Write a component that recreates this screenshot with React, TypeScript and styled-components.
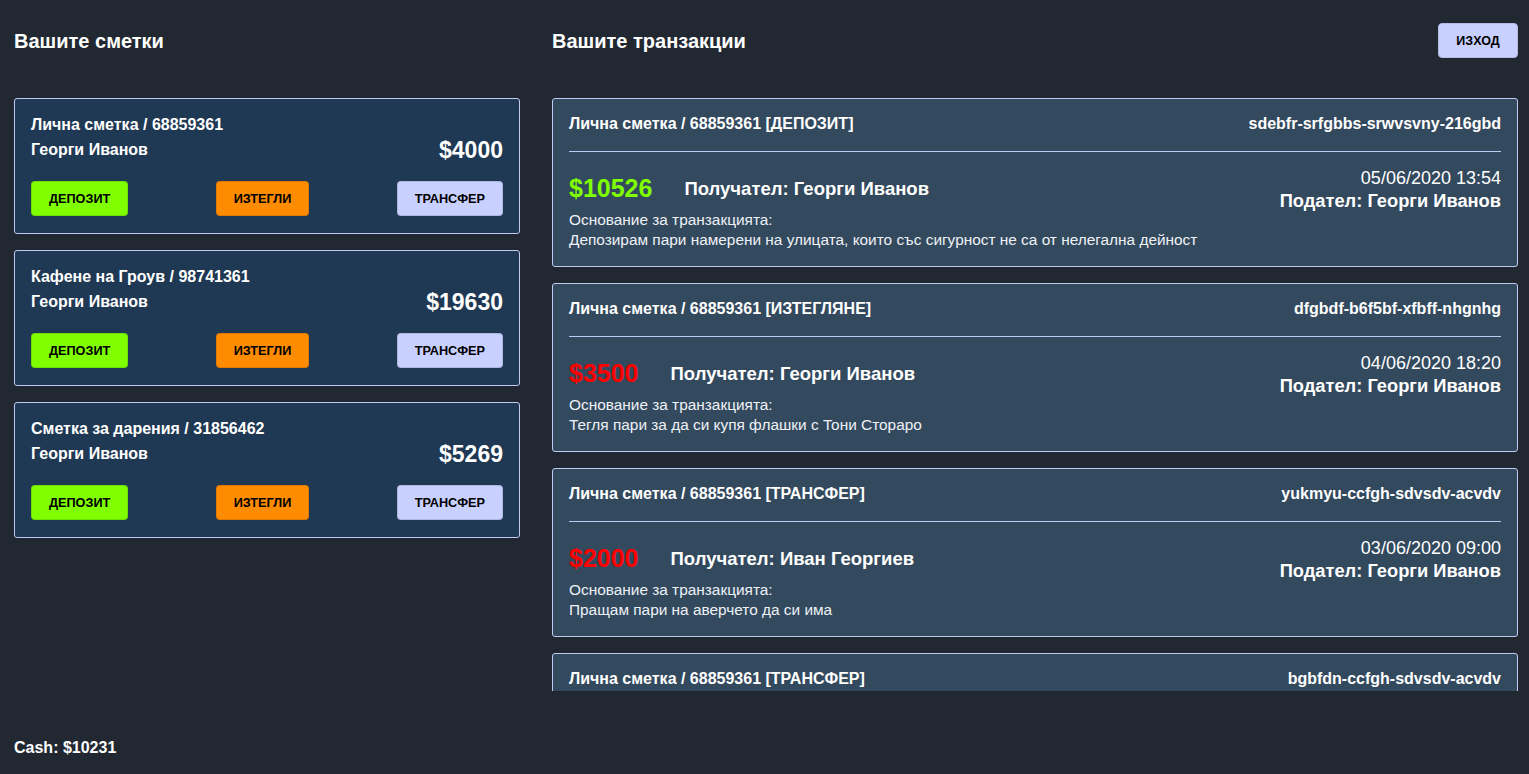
import React from "react"
import styled, { createGlobalStyle } from "styled-components"

const GlobalStyle = createGlobalStyle`
  html, body {
    margin: 0;
    padding: 0;
    background: #222831;
    font-family: "Liberation Sans", Arial, sans-serif;
    color: #ffffff;
  }
  * { box-sizing: border-box; }
`

const Page = styled.div`
  height: 100vh;
  padding: 23px 11px 0 14px;
  display: flex;
  flex-direction: column;
  overflow: hidden;
`

const Layout = styled.div`
  display: grid;
  grid-template-columns: 506px 1fr;
  grid-template-rows: 35px 593px;
  column-gap: 32px;
  row-gap: 40px;
`

const HeaderCell = styled.div`
  display: flex;
  align-items: center;
  justify-content: space-between;
`

const Heading = styled.h2`
  margin: 0;
  font-size: 20px;
  line-height: 24px;
  font-weight: bold;
`

const ExitButton = styled.button`
  height: 35px;
  width: 80px;
  border: 1px solid #b4bce6;
  border-radius: 4px;
  background: #c8d0ff;
  color: #000;
  font-family: "Liberation Sans", Arial, sans-serif;
  font-weight: bold;
  font-size: 12.5px;
  cursor: pointer;
`

const AccountList = styled.div`
  display: flex;
  flex-direction: column;
  gap: 16px;
`

const AccountCard = styled.div`
  background: #1f3853;
  border: 1px solid #c0c9f2;
  border-radius: 3px;
  padding: 17px 16px;
`

const AccountTitle = styled.div`
  font-size: 16px;
  font-weight: bold;
  line-height: 18px;
`

const AccountRow = styled.div`
  margin-top: 4px;
  height: 24px;
  display: flex;
  align-items: center;
  justify-content: space-between;
`

const OwnerName = styled.span`
  font-size: 16px;
  font-weight: bold;
`

const Balance = styled.span`
  font-size: 23px;
  font-weight: bold;
`

const ButtonRow = styled.div`
  margin-top: 19px;
  display: flex;
  justify-content: space-between;
`

const ActionButton = styled.button<{ $bg: string }>`
  height: 35px;
  padding: 0 17px;
  border: 1px solid rgba(0, 0, 0, 0.12);
  border-radius: 4px;
  background: ${p => p.$bg};
  color: #000;
  font-family: "Liberation Sans", Arial, sans-serif;
  font-weight: bold;
  font-size: 12.7px;
  line-height: 16px;
  cursor: pointer;
`

const TransactionList = styled.div`
  display: flex;
  flex-direction: column;
  gap: 16px;
  overflow-y: auto;
  scrollbar-width: none;
  &::-webkit-scrollbar { display: none; }
`

const TransactionCard = styled.div`
  flex-shrink: 0;
  background: #33495e;
  border: 1px solid #c0c9f2;
  border-radius: 3px;
  padding: 16px;
`

const TxHeader = styled.div`
  display: flex;
  justify-content: space-between;
  font-size: 16px;
  font-weight: bold;
  line-height: 18px;
`

const Divider = styled.hr`
  margin: 18px 0 16px;
  border: none;
  height: 1px;
  background: #c0c9f2;
`

const TxBody = styled.div`
  display: flex;
  justify-content: space-between;
  align-items: flex-start;
`

const TxMain = styled.div`
  display: flex;
  flex-direction: column;
`

const AmountRow = styled.div`
  height: 40px;
  display: flex;
  align-items: center;
  gap: 32px;
  margin-bottom: 2px;
`

const Amount = styled.span<{ $color: string }>`
  font-size: 25px;
  font-weight: bold;
  color: ${p => p.$color};
`

const Party = styled.span`
  font-size: 18.5px;
  font-weight: bold;
  margin-top: 2px;
`

const Reason = styled.div`
  font-size: 15.4px;
  line-height: 20px;
  color: #eef1f6;
`

const TxSide = styled.div`
  display: flex;
  flex-direction: column;
  align-items: flex-end;
`

const TxDate = styled.div`
  font-size: 18px;
  line-height: 20px;
`

const Sender = styled.div`
  margin-top: 2px;
  font-size: 18.3px;
  line-height: 22px;
  font-weight: bold;
`

const Footer = styled.div`
  margin-top: 47px;
  font-size: 16px;
  font-weight: bold;
  line-height: 20px;
`

const accounts = [
  { name: "Лична сметка", number: "68859361", owner: "Георги Иванов", balance: 4000 },
  { name: "Кафене на Гроув", number: "98741361", owner: "Георги Иванов", balance: 19630 },
  { name: "Сметка за дарения", number: "31856462", owner: "Георги Иванов", balance: 5269 },
]

const transactions = [
  {
    type: "ДЕПОЗИТ",
    id: "sdebfr-srfgbbs-srwvsvny-216gbd",
    amount: 10526,
    incoming: true,
    receiver: "Георги Иванов",
    date: "05/06/2020 13:54",
    sender: "Георги Иванов",
    reason: "Депозирам пари намерени на улицата, които със сигурност не са от нелегална дейност",
  },
  {
    type: "ИЗТЕГЛЯНЕ",
    id: "dfgbdf-b6f5bf-xfbff-nhgnhg",
    amount: 3500,
    incoming: false,
    receiver: "Георги Иванов",
    date: "04/06/2020 18:20",
    sender: "Георги Иванов",
    reason: "Тегля пари за да си купя флашки с Тони Стораро",
  },
  {
    type: "ТРАНСФЕР",
    id: "yukmyu-ccfgh-sdvsdv-acvdv",
    amount: 2000,
    incoming: false,
    receiver: "Иван Георгиев",
    date: "03/06/2020 09:00",
    sender: "Георги Иванов",
    reason: "Пращам пари на аверчето да си има",
  },
  {
    type: "ТРАНСФЕР",
    id: "bgbfdn-ccfgh-sdvsdv-acvdv",
    amount: 1500,
    incoming: false,
    receiver: "Иван Георгиев",
    date: "02/06/2020 11:30",
    sender: "Георги Иванов",
    reason: "Връщам заема",
  },
]

export default function App() {
  return (
    <>
      <GlobalStyle />
      <Page>
        <Layout>
          <HeaderCell>
            <Heading>Вашите сметки</Heading>
          </HeaderCell>
          <HeaderCell>
            <Heading>Вашите транзакции</Heading>
            <ExitButton>ИЗХОД</ExitButton>
          </HeaderCell>

          <AccountList>
            {accounts.map(acc => (
              <AccountCard key={acc.number}>
                <AccountTitle>
                  {acc.name} / {acc.number}
                </AccountTitle>
                <AccountRow>
                  <OwnerName>{acc.owner}</OwnerName>
                  <Balance>${acc.balance}</Balance>
                </AccountRow>
                <ButtonRow>
                  <ActionButton $bg="#7fff00">ДЕПОЗИТ</ActionButton>
                  <ActionButton $bg="#ff8c00">ИЗТЕГЛИ</ActionButton>
                  <ActionButton $bg="#c8d0ff">ТРАНСФЕР</ActionButton>
                </ButtonRow>
              </AccountCard>
            ))}
          </AccountList>

          <TransactionList>
            {transactions.map(tx => (
              <TransactionCard key={tx.id}>
                <TxHeader>
                  <span>Лична сметка / 68859361 [{tx.type}]</span>
                  <span>{tx.id}</span>
                </TxHeader>
                <Divider />
                <TxBody>
                  <TxMain>
                    <AmountRow>
                      <Amount $color={tx.incoming ? "#7fff00" : "#ff0000"}>${tx.amount}</Amount>
                      <Party>Получател: {tx.receiver}</Party>
                    </AmountRow>
                    <Reason>Основание за транзакцията:</Reason>
                    <Reason>{tx.reason}</Reason>
                  </TxMain>
                  <TxSide>
                    <TxDate>{tx.date}</TxDate>
                    <Sender>Подател: {tx.sender}</Sender>
                  </TxSide>
                </TxBody>
              </TransactionCard>
            ))}
          </TransactionList>
        </Layout>
        <Footer>Cash: $10231</Footer>
      </Page>
    </>
  )
}
